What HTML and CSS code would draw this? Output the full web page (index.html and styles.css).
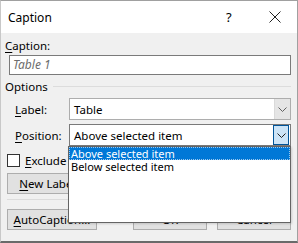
FILE: index.html
```html
<!DOCTYPE html>
<html lang="en">
<head>
  <meta charset="UTF-8" />
  <title>Caption</title>
  <link rel="stylesheet" href="styles.css">
</head>
<body>
  <div class="window">
    <div class="titlebar">
      <span class="title">Caption</span>
      <span class="help">?</span>
      <span class="close">
        <svg width="12" height="12" viewBox="0 0 12 12"><path d="M0.5 0.5 L11.5 11.5 M11.5 0.5 L0.5 11.5" stroke="#222" stroke-width="1" fill="none"/></svg>
      </span>
    </div>

    <div class="content">
      <div class="field-label"><u>C</u>aption:</div>
      <div class="textbox">Table 1</div>

      <div class="group-title"><span>Options</span><span class="group-line"></span></div>

      <div class="row">
        <span class="row-label"><u>L</u>abel:</span>
        <div class="combo">
          <span class="combo-text">Table</span>
          <span class="combo-btn">
            <svg width="9" height="5" viewBox="0 0 9 5"><path d="M0.5 0.5 L4.5 4.5 L8.5 0.5" stroke="#606060" fill="none"/></svg>
          </span>
        </div>
      </div>

      <div class="row">
        <span class="row-label"><u>P</u>osition:</span>
        <div class="combo focused">
          <span class="combo-text">Above selected item</span>
          <span class="combo-btn">
            <svg width="9" height="5" viewBox="0 0 9 5"><path d="M0.5 0.5 L4.5 4.5 L8.5 0.5" stroke="#222" fill="none"/></svg>
          </span>
        </div>
        <div class="dropdown">
          <div class="item selected">Above selected item</div>
          <div class="item">Below selected item</div>
        </div>
      </div>

      <!-- the open list covers the right part of these two rows -->
      <div class="covered">
        <div class="check-row">
          <span class="checkbox"></span>
          <span class="nowrap"><u>E</u>xclude label from caption</span>
        </div>

        <div class="btn-row">
          <button class="btn"><u>N</u>ew Label...</button>
        </div>
      </div>

      <div class="separator"></div>

      <div class="footer">
        <button class="btn wide"><u>A</u>utoCaption...</button>
        <span class="spacer"></span>
        <button class="btn ok">OK</button>
        <button class="btn ok">Cancel</button>
      </div>
    </div>
  </div>
</body>
</html>
```

FILE: styles.css
```css
body {
  margin: 0;
  font-family: "Noto Sans", "Open Sans", sans-serif;
  font-size: 11.5px;
  color: #000;
  background: #fff;
}

u {
  text-decoration: underline;
  text-underline-offset: 2px;
}

.window {
  width: 298px;
  height: 243px;
  box-sizing: border-box;
  border: 1px solid #a0a0a0;
  border-bottom: 2px solid #6a6a6a;
  border-left-color: #c8c8c8;
  background: #f0f0f0;
  display: flex;
  flex-direction: column;
  overflow: hidden;
}

.titlebar {
  height: 32px;
  background: #fff;
  display: flex;
  align-items: center;
  flex-shrink: 0;
}

.title {
  padding-left: 7px;
  font-size: 12px;
  flex: 1;
}

.help {
  font-size: 13px;
  width: 12px;
  margin-right: 31px;
}

.close {
  width: 12px;
  height: 12px;
  margin-right: 16px;
  display: flex;
}

.content {
  position: relative;
  padding: 6px 6px 0 4px;
  display: flex;
  flex-direction: column;
}

.field-label {
  height: 16px;
  line-height: 14px;
}

.textbox {
  margin-left: 4px;
  height: 20px;
  box-sizing: border-box;
  border: 1px solid #7a7a7a;
  background: #fff;
  color: #6d6d6d;
  font-style: italic;
  font-size: 12px;
  padding-left: 3px;
  line-height: 18px;
}

.group-title {
  display: flex;
  align-items: center;
  margin-top: 3px;
  height: 17px;
}

.group-line {
  flex: 1;
  height: 1px;
  background: #dcdcdc;
  margin-left: 5px;
}

.row {
  position: relative;
  display: flex;
  align-items: center;
  margin-top: 3px;
  height: 22px;
}

.row + .row {
  margin-top: 4px;
}

.row-label {
  width: 54px;
  padding-left: 10px;
  flex-shrink: 0;
}

.combo {
  flex: 1;
  height: 22px;
  box-sizing: border-box;
  border: 1px solid #adadad;
  background: #fff;
  display: flex;
  align-items: center;
}

.combo-text {
  flex: 1;
  padding-left: 4px;
}

.combo-btn {
  width: 15px;
  height: 20px;
  background: #e5e5e5;
  border-left: 1px solid #dadada;
  display: flex;
  align-items: center;
  justify-content: center;
}

.combo.focused {
  border-color: #7a7a7a;
}

.combo.focused .combo-btn {
  width: 14px;
  height: 18px;
  margin-right: 1px;
  background: #cce4f7;
  border: 1px solid #005499;
}

.dropdown {
  position: absolute;
  left: 63px;
  top: 22px;
  width: 223px;
  height: 77px;
  box-sizing: border-box;
  border: 1px solid #646464;
  background: #fff;
  box-shadow: 1px 1px 2px rgba(0, 0, 0, 0.15);
  z-index: 2;
}

.item {
  height: 13px;
  line-height: 13px;
  padding-left: 2px;
  font-size: 11px;
  overflow: hidden;
}

.item.selected {
  background: #0078d7;
  color: #fff;
  outline: 1px dotted #9cc8ee;
  outline-offset: -1px;
}

.covered {
  width: 64px;
  overflow: hidden;
}

.nowrap {
  white-space: nowrap;
}

.check-row {
  display: flex;
  align-items: center;
  margin-top: 7px;
  height: 14px;
}

.checkbox {
  flex-shrink: 0;
  width: 11px;
  height: 11px;
  border: 1px solid #333;
  background: #fff;
  margin: 0 5px 0 2px;
}

.btn-row {
  display: flex;
  margin-top: 6px;
  padding-left: 2px;
}

.btn {
  font-family: inherit;
  font-size: 11.5px;
  height: 21px;
  box-sizing: border-box;
  border: 1px solid #adadad;
  background: #e1e1e1;
  padding: 0;
  color: #000;
  width: 90px;
  flex-shrink: 0;
  white-space: nowrap;
}

.separator {
  height: 1px;
  background: #dcdcdc;
  margin: 5px 0 0 2px;
}

.footer {
  display: flex;
  margin-top: 9px;
  padding-left: 2px;
}

.spacer {
  flex: 1;
}

.btn.ok {
  width: 74px;
  margin-left: 10px;
}
```
